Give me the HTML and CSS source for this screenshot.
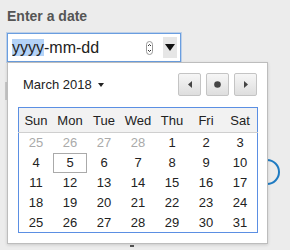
FILE: index.html
```html
<!DOCTYPE html>
<html>
<head>
<meta charset="utf-8">
<link rel="stylesheet" href="styles.css">
</head>
<body>
<div class="page">
  <div class="label">Enter a date</div>
  <div class="field">
    <div class="value"><span class="sel">yyyy</span>-mm-dd</div>
    <svg class="spin" width="7" height="14" viewBox="0 0 7 14"><rect x="0.5" y="0.5" width="6" height="13" rx="3" fill="#fff" stroke="#999"/><path d="M2 5 L3.5 3.5 L5 5 M2 9 L3.5 10.5 L5 9" fill="none" stroke="#333" stroke-width="1"/></svg>
    <div class="drop"><svg width="10" height="7" viewBox="0 0 10 7"><path d="M0 0 H10 L5 7 Z" fill="#111"/></svg></div>

    <div class="popup">
      <div class="head">
        <div class="month">March 2018 <span class="caret"></span></div>
        <div class="nav">
          <div class="btn"><svg width="4" height="7" viewBox="0 0 4 7"><path d="M4 0 V7 L0 3.5 Z" fill="#444"/></svg></div>
          <div class="btn"><svg width="7" height="7" viewBox="0 0 7 7"><circle cx="3.5" cy="3.5" r="3.3" fill="#444"/></svg></div>
          <div class="btn"><svg width="4" height="7" viewBox="0 0 4 7"><path d="M0 0 V7 L4 3.5 Z" fill="#444"/></svg></div>
        </div>
      </div>
      <table class="cal">
        <thead>
          <tr><th>Sun</th><th>Mon</th><th>Tue</th><th>Wed</th><th>Thu</th><th>Fri</th><th>Sat</th></tr>
        </thead>
        <tbody>
          <tr><td class="other">25</td><td class="other">26</td><td class="other">27</td><td class="other">28</td><td>1</td><td>2</td><td>3</td></tr>
          <tr><td>4</td><td class="today">5</td><td>6</td><td>7</td><td>8</td><td>9</td><td>10</td></tr>
          <tr><td>11</td><td>12</td><td>13</td><td>14</td><td>15</td><td>16</td><td>17</td></tr>
          <tr><td>18</td><td>19</td><td>20</td><td>21</td><td>22</td><td>23</td><td>24</td></tr>
          <tr><td>25</td><td>26</td><td>27</td><td>28</td><td>29</td><td>30</td><td>31</td></tr>
        </tbody>
      </table>
    </div>
  </div>
  <div class="ghost-bar"></div>
  <div class="ghost-ring"></div>
  <div class="ghost-tick"></div>
</div>
</body>
</html>
```
FILE: styles.css
```css
html, body {
  margin: 0;
  padding: 0;
  background: #ececec;
  width: 290px;
  height: 250px;
  overflow: hidden;
  font-family: "Liberation Sans", Arial, sans-serif;
}
.page {
  position: relative;
  height: 250px;
  padding: 8px 0 0 7px;
  box-sizing: border-box;
}
.label {
  font-size: 14px;
  font-weight: bold;
  color: #555;
  line-height: 17px;
  margin-bottom: 8px;
}
.field {
  position: relative;
  width: 174px;
  height: 29px;
  box-sizing: border-box;
  border: 1px solid #6a9ee0;
  box-shadow: 0 0 0 1px rgba(106, 158, 224, 0.35);
  background: #fff;
  display: flex;
  align-items: center;
  padding-left: 4px;
  z-index: 2;
}
.value {
  font-size: 16px;
  color: #222;
  flex: 1;
  line-height: 21px;
}
.sel {
  background: #b4d3f7;
  padding: 0;
}
.spin {
  margin-right: 10px;
}
.drop {
  width: 14px;
  height: 21px;
  background: #e6e6e6;
  display: flex;
  align-items: center;
  justify-content: center;
  margin-right: 3px;
}
.popup {
  position: absolute;
  top: 28px;
  left: -1px;
  width: 261px;
  height: 182px;
  box-sizing: border-box;
  background: #fff;
  border: 1px solid #bdbdbd;
  box-shadow: 0 1px 3px rgba(0,0,0,0.15);
  padding: 10px 10px 0 10px;
}
.head {
  display: flex;
  justify-content: space-between;
  align-items: center;
  height: 23px;
  margin-bottom: 11px;
}
.month {
  font-size: 13px;
  color: #222;
  padding-left: 5px;
  display: flex;
  align-items: center;
}
.caret {
  display: inline-block;
  width: 0;
  height: 0;
  border-left: 3.5px solid transparent;
  border-right: 3.5px solid transparent;
  border-top: 4px solid #222;
  margin-left: 6px;
}
.nav {
  display: flex;
  gap: 5px;
}
.btn {
  width: 23px;
  height: 23px;
  box-sizing: border-box;
  border: 1px solid #c4c4c4;
  border-radius: 2px;
  background: linear-gradient(#f6f6f6, #dedede);
  display: flex;
  align-items: center;
  justify-content: center;
}
.cal {
  border-collapse: collapse;
  border: 1px solid #5b8fe3;
  width: 240px;
  table-layout: fixed;
  font-size: 13px;
  color: #222;
}
.cal th {
  background: #f2f2f2;
  font-weight: normal;
  height: 24px;
  padding: 0;
  border-bottom: 1px solid #cfcfcf;
  text-align: center;
  width: 34px;
}
.cal td {
  height: 20px;
  padding: 0;
  text-align: center;
  box-sizing: border-box;
}
.cal td.other {
  color: #aaa;
}
.cal td.today {
  outline: 1px solid #aaa;
  outline-offset: -1px;
}
.ghost-bar {
  position: absolute;
  left: 5px;
  top: 82px;
  width: 2px;
  height: 18px;
  background: #c8c8c8;
}
.ghost-ring {
  position: absolute;
  left: 254px;
  top: 159px;
  width: 22px;
  height: 22px;
  border: 2px solid #1f7bc2;
  border-radius: 50%;
  z-index: 0;
}
.ghost-tick {
  position: absolute;
  left: 130px;
  top: 245px;
  width: 4px;
  height: 2px;
  background: #555;
}
```
